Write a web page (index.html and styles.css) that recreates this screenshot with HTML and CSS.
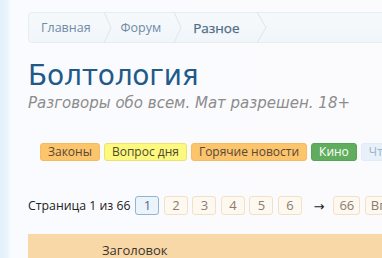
FILE: index.html
```html
<!DOCTYPE html>
<html lang="ru">
<head>
<meta charset="utf-8">
<link rel="stylesheet" href="styles.css">
</head>
<body>
<div class="page">
  <nav class="crumbs">
    <a class="crumb">Главная<svg class="chev" width="10" height="31" viewBox="0 0 10 31"><polyline points="1,0 8,15.5 1,31" fill="none" stroke="#e1e9f1" stroke-width="1.2"/></svg></a>
    <a class="crumb">Форум<svg class="chev" width="10" height="31" viewBox="0 0 10 31"><polyline points="1,0 8,15.5 1,31" fill="none" stroke="#e1e9f1" stroke-width="1.2"/></svg></a>
    <a class="crumb crumb-last">Разное<svg class="chev" width="12" height="31" viewBox="0 0 12 31"><polyline points="1,0 10,15.5 1,31" fill="none" stroke="#e1e9f1" stroke-width="1.2"/></svg></a>
  </nav>
  <h1 class="title">Болтология</h1>
  <p class="desc">Разговоры обо всем. Мат разрешен. 18+</p>
  <div class="tags">
    <span class="tag tag-orange">Законы</span>
    <span class="tag tag-yellow">Вопрос дня</span>
    <span class="tag tag-orange">Горячие новости</span>
    <span class="tag tag-green">Кино</span>
    <span class="tag tag-light">Что нового</span>
  </div>
  <div class="pager">
    <span class="pager-label">Страница 1 из 66</span>
    <span class="pg pg-active">1</span>
    <span class="pg">2</span>
    <span class="pg">3</span>
    <span class="pg">4</span>
    <span class="pg">5</span>
    <span class="pg">6</span>
    <span class="pager-arrow">→</span>
    <span class="pg">66</span>
    <span class="pg">Вперёд</span>
  </div>
  <div class="thead">
    <span class="th-title">Заголовок</span>
  </div>
</div>
</body>
</html>
```
FILE: styles.css
```css
html, body {
  margin: 0;
  padding: 0;
  overflow: hidden;
}
body {
  width: 382px;
  height: 258px;
  background: linear-gradient(to right, #e4f1fa 0px, #e9f4fb 7px, #fafbfe 11px, #fbfbfe 100%);
  font-family: "Open Sans", "DejaVu Sans", sans-serif;
}
.page {
  width: 520px;
  padding: 12px 0 0 28px;
}
.crumbs {
  display: flex;
  height: 31px;
  box-sizing: border-box;
  border: 1px solid #e6edf4;
  border-radius: 4px;
  background: linear-gradient(to bottom, #f6f9fc, #f1f6fa);
  align-items: stretch;
}
.crumb {
  position: relative;
  display: flex;
  align-items: center;
  padding: 0 18px 0 12px;
  font-size: 12.5px;
  color: #6f8ba6;
  white-space: nowrap;
}
.crumb + .crumb {
  padding-left: 12px;
}
.crumb-last {
  color: #4f6c88;
  font-size: 13.5px;
  padding-left: 14px !important;
  padding-right: 24px;
  -webkit-text-stroke: 0.25px #4f6c88;
}
.chev {
  position: absolute;
  right: -4px;
  top: -1px;
}
.title {
  margin: 15px 0 0 0;
  font-family: "DejaVu Sans", sans-serif;
  font-weight: normal;
  font-size: 28px;
  line-height: 36px;
  color: #215a89;
  letter-spacing: -0.2px;
}
.desc {
  margin: 0;
  font-family: "DejaVu Sans", sans-serif;
  font-style: italic;
  font-size: 15px;
  line-height: 18px;
  color: #8c8c8c;
}
.tags {
  display: flex;
  gap: 4px;
  margin: 31px 0 0 12px;
}
.tag {
  display: inline-block;
  height: 18px;
  box-sizing: border-box;
  line-height: 16px;
  padding: 0 7px;
  font-size: 12px;
  border-radius: 3px;
  border: 1px solid transparent;
  white-space: nowrap;
}
.tag-orange {
  background: #fcc46b;
  border-color: #f5bb60;
  color: #56483a;
}
.tag-yellow {
  background: #fdf97f;
  border-color: #ece36c;
  color: #4f4a30;
}
.tag-green {
  background: #5fad5d;
  border-color: #58a356;
  color: #ffffff;
}
.tag-light {
  background: #e8f1f9;
  border-color: #e2ecf5;
  color: #9db3c8;
}
.pager {
  display: flex;
  align-items: center;
  margin-top: 35px;
  height: 19px;
  font-size: 12.3px;
  white-space: nowrap;
}
.pager-label {
  color: #222;
  margin-right: 5px;
}
.pg {
  display: inline-block;
  box-sizing: border-box;
  min-width: 24px;
  height: 19px;
  line-height: 17px;
  padding: 0 5px;
  text-align: center;
  border: 1px solid #f3e0c6;
  border-radius: 3px;
  background: #fdf8f0;
  color: #8b7c6c;
  margin-right: 4.5px;
  font-size: 13px;
}
.pg-active {
  border-color: #92b3d2;
  background: #ecf4fb;
  color: #4d6c8c;
}
.pager-arrow {
  color: #222;
  margin: 0 9px 0 7px;
  font-size: 13px;
}
.thead {
  margin-top: 19px;
  height: 30px;
  box-sizing: border-box;
  padding-top: 7px;
  background: #f9d8a8;
  display: flex;
  align-items: flex-start;
}
.th-title {
  margin-left: 74px;
  font-size: 13px;
  color: #3a3530;
}
```
